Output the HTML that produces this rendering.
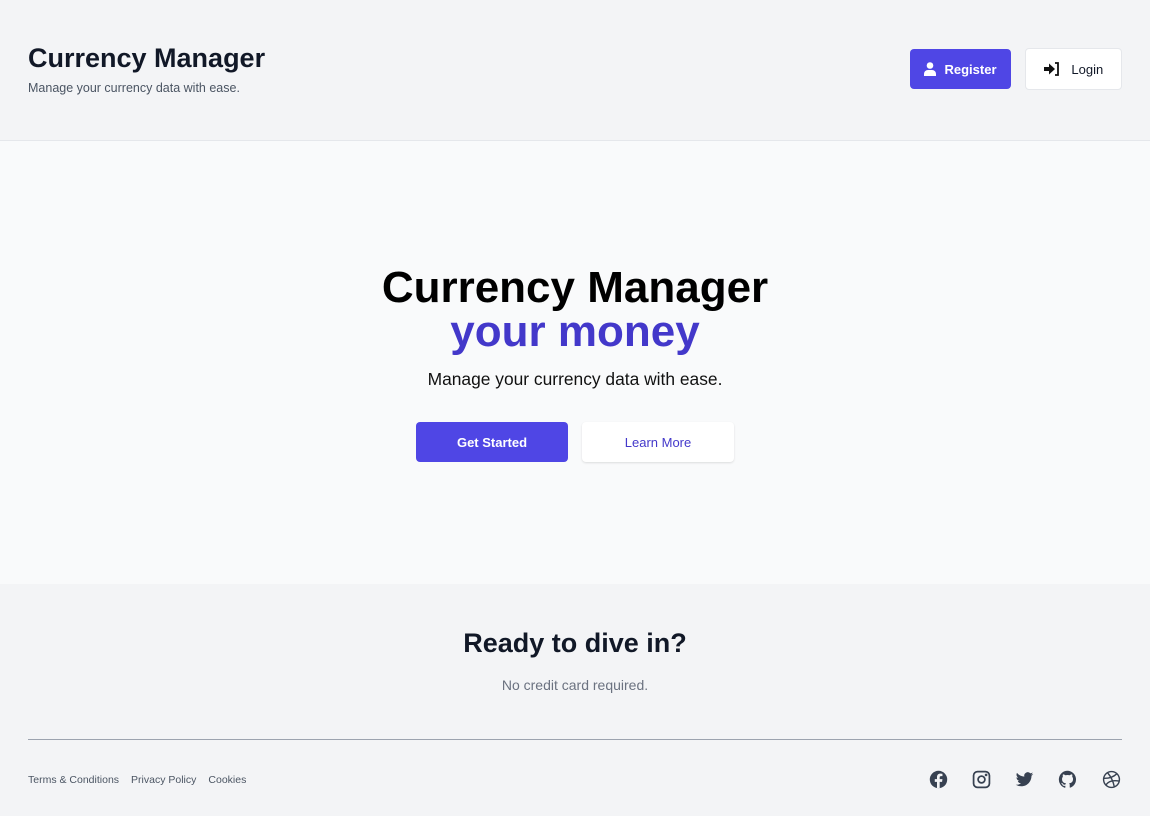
<!DOCTYPE html>
<html><head><meta charset="utf-8"><style>
*{box-sizing:border-box;margin:0;padding:0}
body{width:1150px;height:816px;background:#f3f4f6;font-family:"Liberation Sans",sans-serif;color:#111827;overflow:hidden;position:relative}
header{height:141px;border-bottom:1px solid #e5e7eb;position:relative}
.t{position:absolute;left:28px;top:43px;font-size:27px;font-weight:bold;color:#111827}
.st{position:absolute;left:28px;top:81px;font-size:12.5px;color:#4b5563}
.btn{position:absolute;display:flex;align-items:center;justify-content:center;gap:8px;font-size:13px;border-radius:4px}
.reg{left:910px;top:49px;width:101px;height:40px;background:#4f46e5;color:#fff;font-weight:bold}
.log{left:1025px;top:48px;width:97px;height:42px;background:#fff;border:1px solid #e5e7eb;color:#111827}
main{height:443px;background:#f9fafb;text-align:center;position:relative}
h1{position:absolute;width:100%;top:125px;font-size:44px;line-height:44px;font-weight:900;color:#000}
h1 span{color:#4338ca}
.sub{position:absolute;width:100%;top:228px;font-size:17.4px;color:#111}
.gs{left:416px;top:281px;width:152px;height:40px;background:#4f46e5;color:#fff;font-weight:bold}
.lm{left:582px;top:281px;width:152px;height:40px;background:#fff;color:#4338ca;box-shadow:0 1px 2px rgba(0,0,0,.12)}
.cta{position:absolute;width:100%;top:628px;text-align:center;font-size:27px;font-weight:900}
.nc{position:absolute;width:100%;top:677px;text-align:center;font-size:14px;color:#6b7280}
.hr{position:absolute;left:28px;right:28px;top:739px;border-top:1px solid #9ca3af}
.links{position:absolute;left:28px;top:774px;font-size:10.5px;color:#4b5563}
.links span{margin-right:12px}
.ic{position:absolute;top:770px;width:19px;height:19px}
</style></head><body>
<header>
<div class="t">Currency Manager</div>
<div class="st">Manage your currency data with ease.</div>
<div class="btn reg"><svg width="12" height="14" viewBox="0 0 12 14" fill="#fff"><circle cx="6" cy="3.5" r="3.3"/><path d="M0 14v-2a4 4 0 0 1 4-4h4a4 4 0 0 1 4 4v2z"/></svg>Register</div>
<div class="btn log"><svg width="16" height="14" viewBox="0 0 16 14"><path d="M0 5h5V1.5L11 7l-6 5.5V9H0z" fill="#111"/><path d="M11 1h3v12h-3" fill="none" stroke="#111" stroke-width="1.8"/></svg>&nbsp;Login</div>
</header>
<main>
<h1>Currency Manager<br><span>your money</span></h1>
<div class="sub">Manage your currency data with ease.</div>
<div class="btn gs">Get Started</div>
<div class="btn lm">Learn More</div>
</main>
<div class="cta">Ready to dive in?</div>
<div class="nc">No credit card required.</div>
<div class="hr"></div>
<div class="links"><span>Terms &amp; Conditions</span><span>Privacy Policy</span><span>Cookies</span></div>
<svg class="ic" style="left:929px" viewBox="0 0 24 24"><circle cx="12" cy="12" r="11" fill="#374151"/><path d="M13.5 23v-8h3l.5-3.5h-3.5V9.5c0-1 .4-1.7 1.8-1.7H17V4.7c-.4 0-1.4-.2-2.6-.2-2.6 0-4.3 1.6-4.3 4.4v2.6H7.3V15h2.8v8z" fill="#f3f4f6"/></svg>
<svg class="ic" style="left:972px" viewBox="0 0 24 24" fill="none" stroke="#374151" stroke-width="2.2"><rect x="2" y="2" width="20" height="20" rx="5"/><circle cx="12" cy="12" r="4.3"/><circle cx="17.8" cy="6.2" r=".6" fill="#374151"/></svg>
<svg class="ic" style="left:1015px" viewBox="0 0 24 24"><path fill="#374151" d="M23 5a9 9 0 0 1-2.6.7 4.5 4.5 0 0 0 2-2.5 9 9 0 0 1-2.9 1.1 4.5 4.5 0 0 0-7.7 4.1A12.8 12.8 0 0 1 2.5 3.7a4.5 4.5 0 0 0 1.4 6 4.5 4.5 0 0 1-2-.6 4.5 4.5 0 0 0 3.6 4.5 4.5 4.5 0 0 1-2 .1 4.5 4.5 0 0 0 4.2 3.1A9 9 0 0 1 1 18.6 12.8 12.8 0 0 0 8 20.6c8.3 0 12.8-6.9 12.8-12.8v-.6A9 9 0 0 0 23 5z"/></svg>
<svg class="ic" style="left:1058px" viewBox="0 0 24 24"><path fill="#374151" d="M12 1a11 11 0 0 0-3.5 21.4c.6.1.8-.2.8-.5v-2c-3 .7-3.7-1.3-3.700-1.3-.5-1.3-1.2-1.6-1.2-1.6-1-.7.1-.7.1-.7 1.1.1 1.700 1.1 1.7 1.1 1 1.7 2.6 1.2 3.2.9.1-.7.4-1.2.7-1.500-2.4-.3-5-1.200-5-5.4 0-1.2.4-2.200 1.1-2.900-.1-.3-.5-1.400.1-2.9 0 0 .9-.3 3 1.1a10.5 10.5 0 0 1 5.5 0c2.1-1.4 3-1.1 3-1.1.6 1.5.2 2.6.1 2.9.7.8 1.1 1.7 1.1 2.9 0 4.2-2.6 5.1-5 5.4.4.3.8 1 .8 2v3c0 .3.2.6.8.5A11 11 0 0 0 12 1z"/></svg>
<svg class="ic" style="left:1102px" viewBox="0 0 24 24" fill="none" stroke="#374151" stroke-width="1.8"><circle cx="12" cy="12" r="10"/><path d="M7 3.5c4 4.5 7 10 8.5 17.5M2.2 10.5c6.5.3 12-1.5 16.5-5.7M4.8 19c3-4.5 8.5-6.5 16.9-5"/></svg>
</body></html>
